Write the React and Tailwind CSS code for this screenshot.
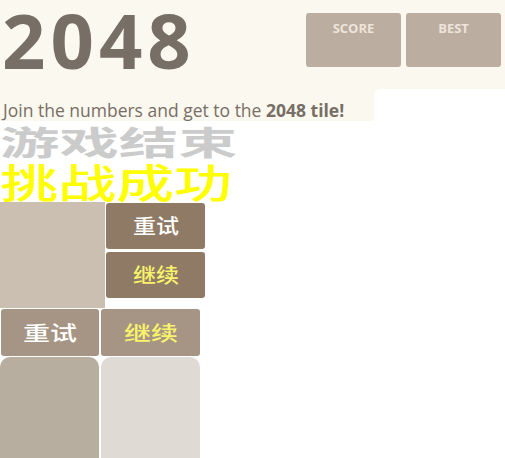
import React from "react";

const cjk = "font-['Noto_Sans_CJK_SC',sans-serif]";

function ScoreBox({ label }) {
  return (
    <div className="w-[95px] h-[54px] rounded-[3px] bg-[#bbada0] flex justify-center pt-[7px]">
      <span className="text-[13px] leading-[16px] font-bold text-[#eee4da] uppercase">{label}</span>
    </div>
  );
}

function Btn({ children, yellow, wide, className }) {
  return (
    <div className={`rounded-[3px] flex items-center justify-center ${className}`}>
      <span
        className={`${cjk} inline-block leading-none font-medium ${
          wide ? "text-[20px] scale-x-[1.35]" : "text-[20px] scale-x-[1.15]"
        } ${yellow ? "text-[#f8f36b]" : "text-white"}`}
      >
        {children}
      </span>
    </div>
  );
}

export default function App() {
  return (
    <div className="w-[505px] h-[458px] overflow-hidden bg-white font-['Open_Sans',sans-serif]">
      {/* heading */}
      <div className="bg-[#faf8ef] h-[121px] flex flex-col">
        <div className="flex justify-between items-start h-[88px]">
          <h1 className="ml-[2px] mt-[-4px] text-[76px] leading-[88px] font-bold tracking-[5px] text-[#776e65] whitespace-nowrap">
            2048
          </h1>
          <div className="flex gap-[5px] mt-[13px] mr-[4px]">
            <ScoreBox label="Score" />
            <ScoreBox label="Best" />
          </div>
        </div>
        <div className="flex justify-between items-end flex-1">
          <p className="ml-[3px] text-[17.5px] leading-[22px] text-[#776e65] whitespace-nowrap">
            Join the numbers and get to the <b>2048 tile!</b>
          </p>
          <div className="w-[131px] h-[32px] bg-white rounded-tl-[6px]" />
        </div>
      </div>

      {/* messages */}
      <div className={`${cjk} h-[40px]`}>
        <div className="origin-left scale-x-[1.8] text-[33px] leading-[40px] font-bold text-[#cbcbcb] whitespace-nowrap">
          游戏结束
        </div>
      </div>
      <div className={`${cjk} h-[41px]`}>
        <div className="origin-left scale-x-[1.45] text-[40px] leading-[41px] font-medium text-[#ffff00] whitespace-nowrap">
          挑战成功
        </div>
      </div>

      {/* tiles */}
      <div className="flex gap-[1px]">
        <div className="w-[105px] h-[106px] bg-[#cbbfb2]" />
        <div className="flex flex-col gap-[3px] pt-[1px]">
          <Btn className="w-[99px] h-[46px] bg-[#8f7a66]">重试</Btn>
          <Btn yellow className="w-[99px] h-[46px] bg-[#8f7a66]">继续</Btn>
        </div>
      </div>
      <div className="flex gap-[2px] pl-[1px] mt-[1px]">
        <Btn wide className="w-[98px] h-[47px] bg-[#a69584]">重试</Btn>
        <Btn wide yellow className="w-[99px] h-[47px] bg-[#a69584]">继续</Btn>
      </div>
      <div className="flex gap-[2px] mt-[1px]">
        <div className="w-[99px] h-[110px] rounded-[10px] bg-[#b8ae9f]" />
        <div className="w-[99px] h-[110px] rounded-[10px] bg-[#e0dad5]" />
      </div>
    </div>
  );
}
